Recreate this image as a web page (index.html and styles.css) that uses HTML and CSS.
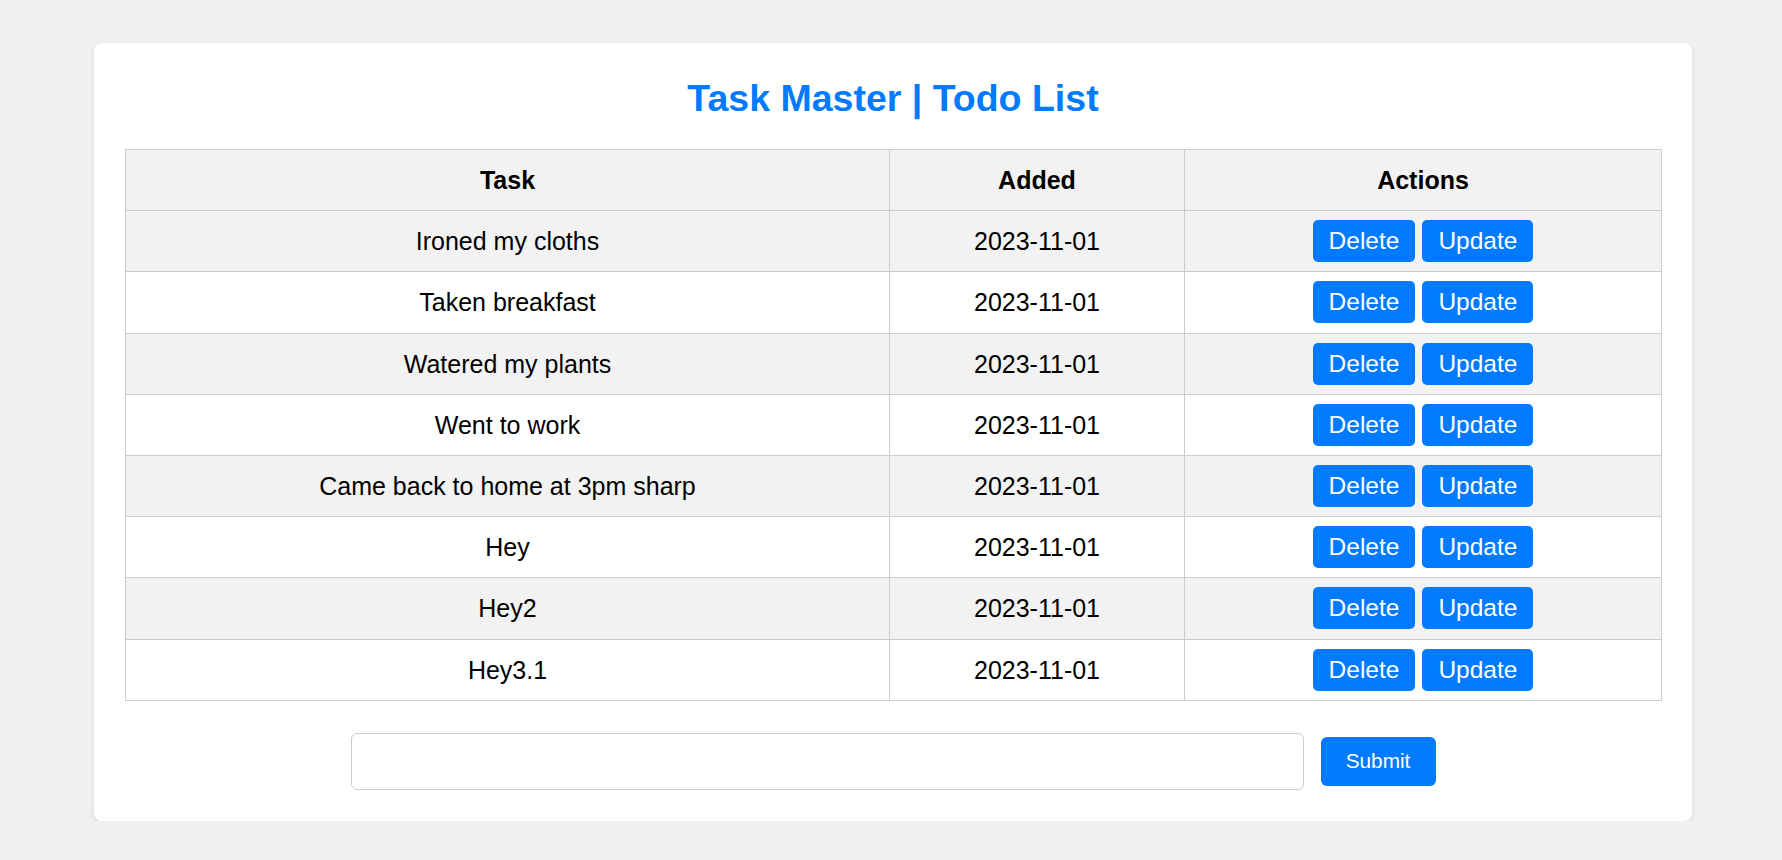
FILE: index.html
```html
<!DOCTYPE html>
<html lang="en">
<head>
<meta charset="utf-8">
<title>Task Master | Todo List</title>
<link rel="stylesheet" href="styles.css">
</head>
<body>
<div class="card">
  <h1 class="title">Task Master | Todo List</h1>
  <table class="tasks">
    <colgroup>
      <col class="col-task">
      <col class="col-added">
      <col class="col-actions">
    </colgroup>
    <thead>
      <tr><th>Task</th><th>Added</th><th>Actions</th></tr>
    </thead>
    <tbody>
      <tr><td>Ironed my cloths</td><td>2023-11-01</td><td><button class="btn">Delete</button> <button class="btn">Update</button></td></tr>
      <tr><td>Taken breakfast</td><td>2023-11-01</td><td><button class="btn">Delete</button> <button class="btn">Update</button></td></tr>
      <tr><td>Watered my plants</td><td>2023-11-01</td><td><button class="btn">Delete</button> <button class="btn">Update</button></td></tr>
      <tr><td>Went to work</td><td>2023-11-01</td><td><button class="btn">Delete</button> <button class="btn">Update</button></td></tr>
      <tr><td>Came back to home at 3pm sharp</td><td>2023-11-01</td><td><button class="btn">Delete</button> <button class="btn">Update</button></td></tr>
      <tr><td>Hey</td><td>2023-11-01</td><td><button class="btn">Delete</button> <button class="btn">Update</button></td></tr>
      <tr><td>Hey2</td><td>2023-11-01</td><td><button class="btn">Delete</button> <button class="btn">Update</button></td></tr>
      <tr><td>Hey3.1</td><td>2023-11-01</td><td><button class="btn">Delete</button> <button class="btn">Update</button></td></tr>
    </tbody>
  </table>
  <form class="add-form">
    <input class="task-input" type="text" name="content">
    <button class="submit" type="button">Submit</button>
  </form>
</div>
</body>
</html>
```
FILE: styles.css
```css
html, body {
  margin: 0;
  background: #f0f0f0;
}
body {
  padding: 43px 90px 0 94px;
  font-family: "Liberation Sans", Arial, sans-serif;
  color: #000;
}
.card {
  width: 1598px;
  box-sizing: border-box;
  background: #fff;
  border-radius: 8px;
  box-shadow: 0 2px 5px rgba(0, 0, 0, 0.1);
  padding: 34px 31px 31px 31px;
}
.title {
  margin: 0 0 30px;
  text-align: center;
  color: #007bff;
  font-size: 37.5px;
  font-weight: bold;
  line-height: 42px;
}
.tasks {
  width: 100%;
  border-collapse: collapse;
  table-layout: fixed;
}
.col-task { width: 764px; }
.col-added { width: 295px; }
.col-actions { width: 477px; }
.tasks th,
.tasks td {
  border: 1px solid #ccc;
  text-align: center;
  vertical-align: middle;
  font-size: 25px;
  line-height: 28px;
  padding: 9px 12px;
  height: 42.2px;
  box-sizing: content-box;
}
.tasks th {
  background: #f2f2f2;
  font-weight: bold;
}
.tasks tbody tr:nth-child(odd) {
  background: #f2f2f2;
}
.tasks tbody tr:nth-child(even) {
  background: #fff;
}
.btn {
  font-family: "Liberation Sans", Arial, sans-serif;
  font-size: 24.5px;
  line-height: 28px;
  background: #007bff;
  color: #fff;
  border: none;
  border-radius: 5px;
  padding: 7px 16px;
  margin: 0;
  vertical-align: middle;
}
.add-form {
  margin: 32px 0 0;
  display: flex;
  justify-content: center;
  align-items: center;
  gap: 17px;
}
.task-input {
  width: 953px;
  height: 57px;
  box-sizing: border-box;
  border: 1px solid #ccc;
  border-radius: 6px;
  font-size: 20px;
  padding: 0 12px;
  margin: 0;
}
.submit {
  width: 115px;
  height: 49px;
  box-sizing: border-box;
  background: #007bff;
  color: #fff;
  border: none;
  border-radius: 6px;
  font-family: "Liberation Sans", Arial, sans-serif;
  font-size: 20.8px;
  margin: 0;
  padding: 0;
}
```
